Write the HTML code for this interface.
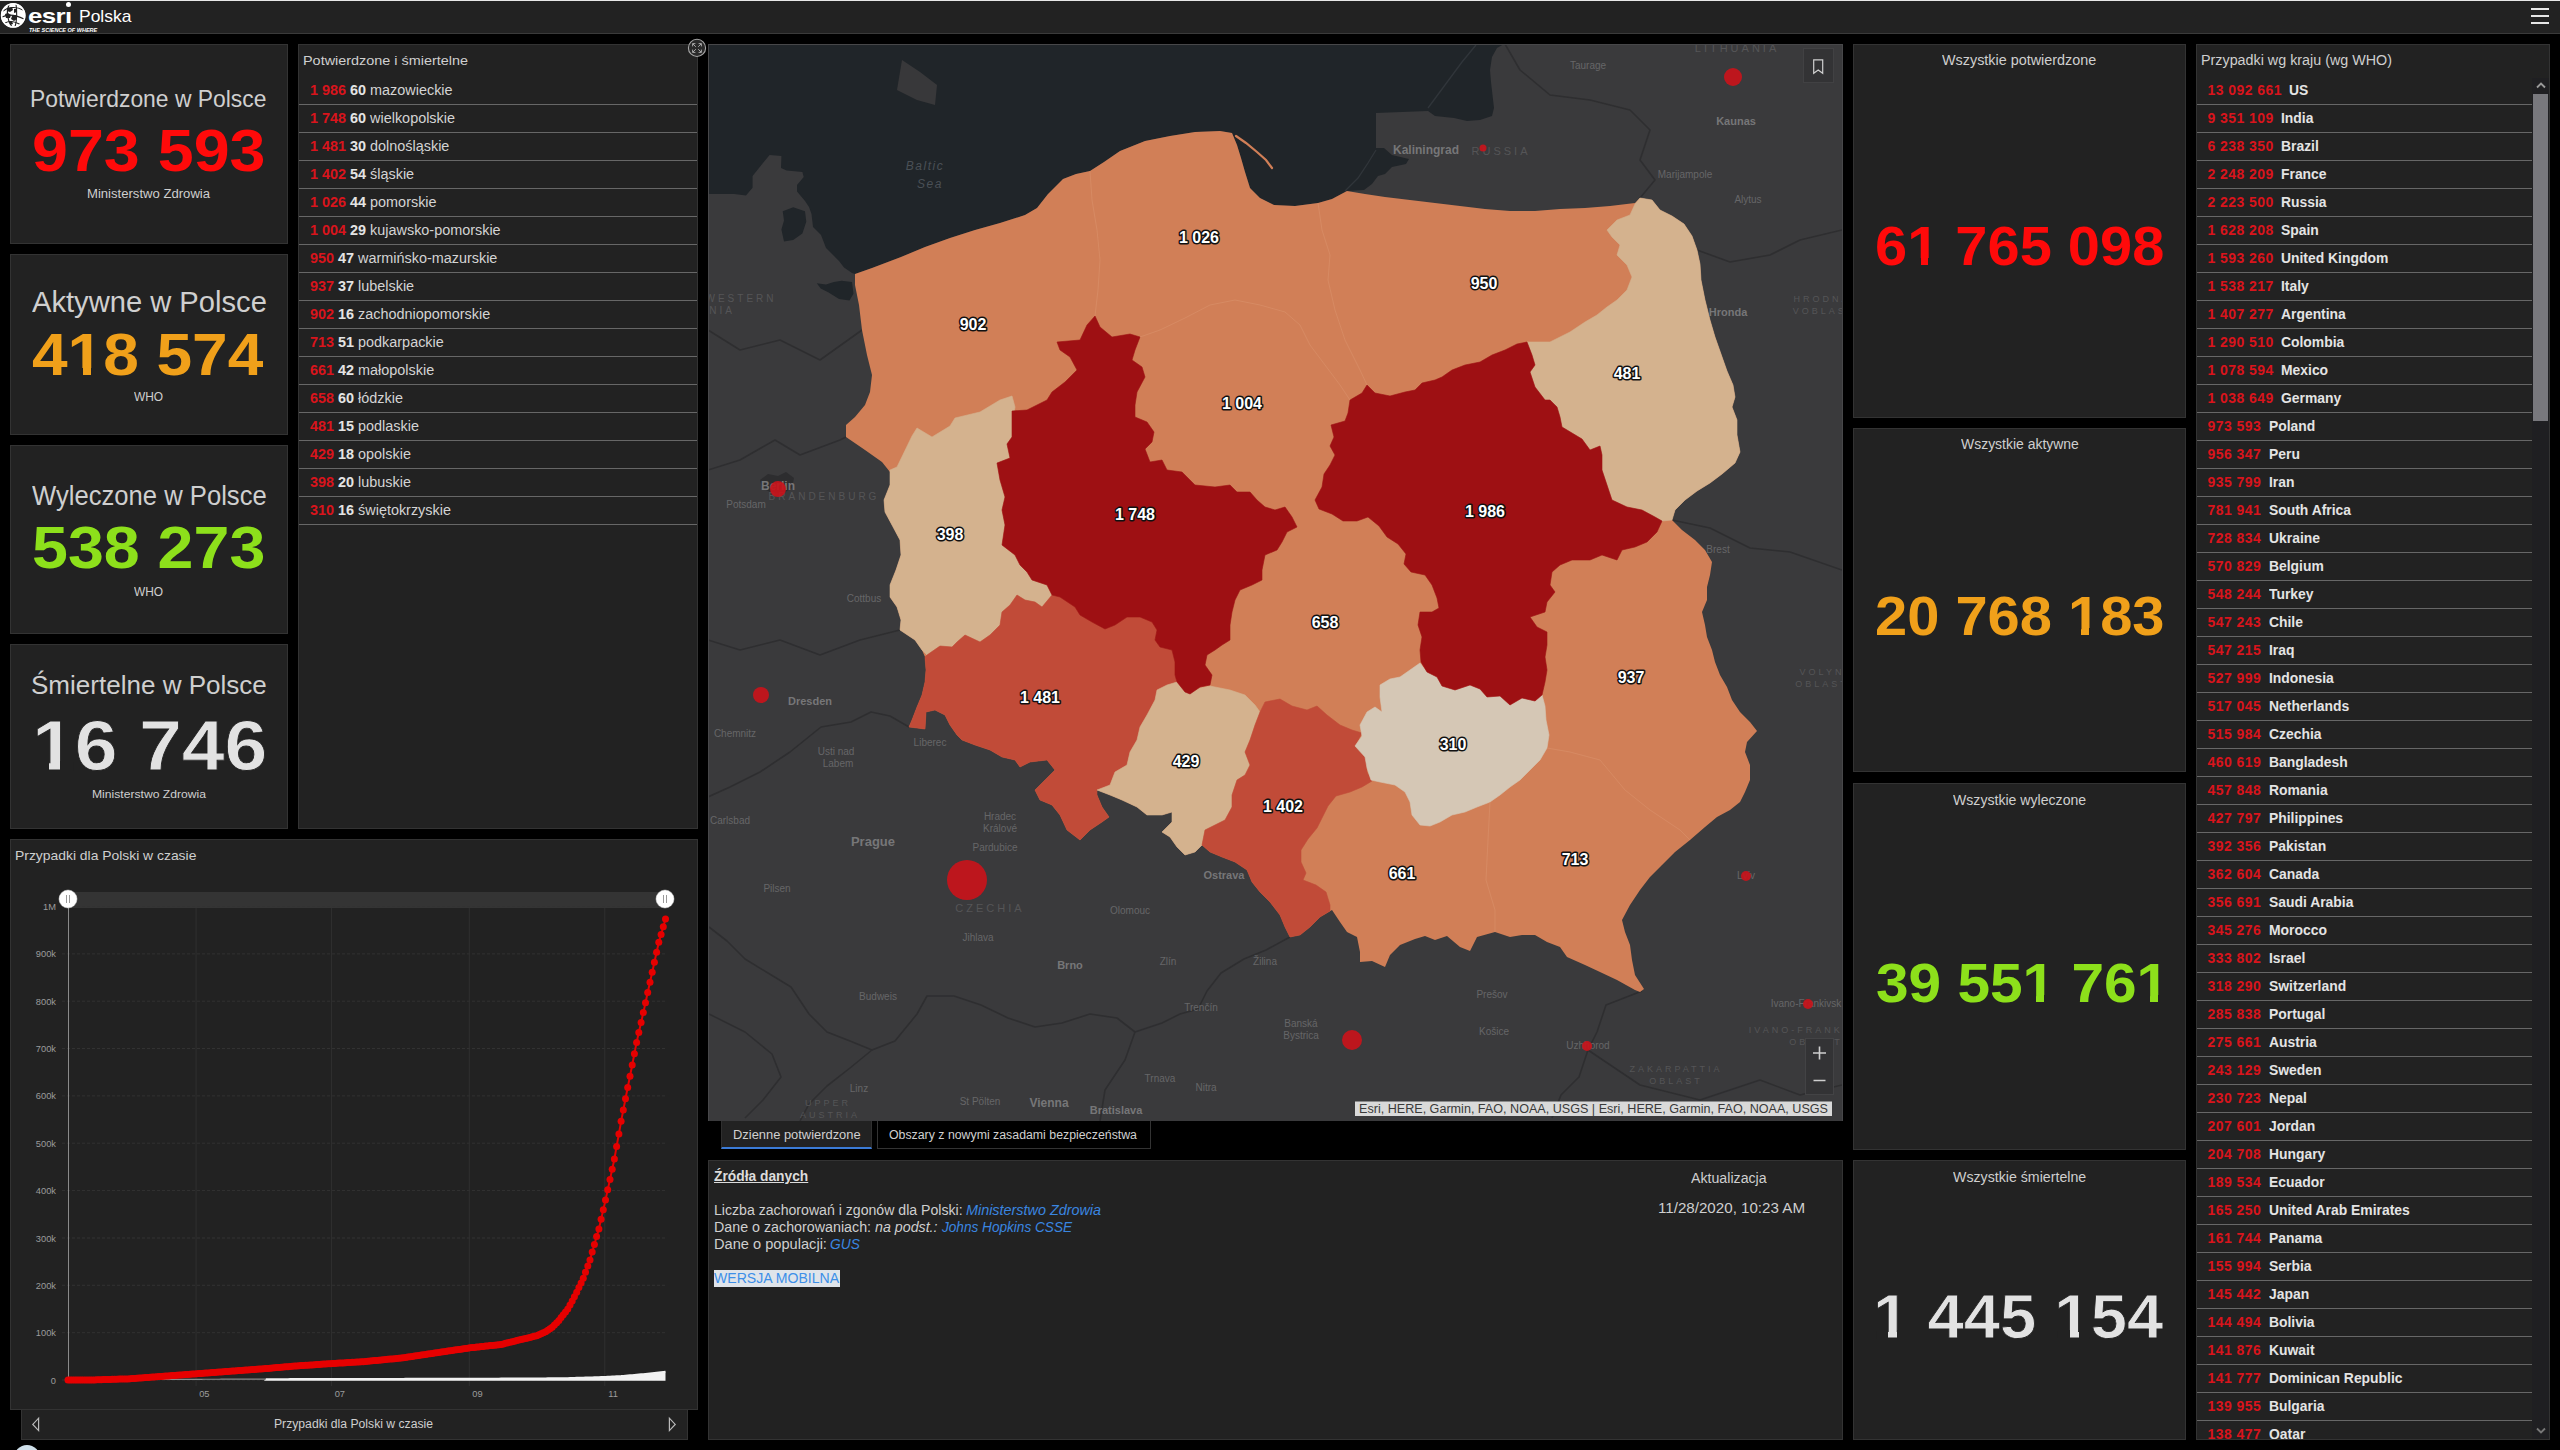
<!DOCTYPE html>
<html lang="pl"><head><meta charset="utf-8"><title>COVID-19 Polska</title><style>
*{box-sizing:border-box;margin:0;padding:0}
html,body{width:2560px;height:1450px;background:#000;overflow:hidden}
body{position:relative;font-family:"Liberation Sans","DejaVu Sans",sans-serif;color:#d4d4d4}
.ft{position:absolute;white-space:pre;line-height:1;transform-origin:0 0;display:block}
.nf{position:absolute;display:block;background:#222}
.panel{position:absolute;background:#222;border:1px solid #333;overflow:hidden}
#hdr{position:absolute;left:0;top:0;width:2560px;height:34px;background:#222;border-top:1px solid #e8e8e8;border-bottom:1px solid #3a3a3a}
.row{position:relative;height:28px;border-bottom:1px solid #676767;white-space:pre;font-size:14px;line-height:27px}
.row b.r{color:#d9141c;font-weight:bold}
.row b.w{color:#e4e4e4;font-weight:bold}
.row b.n{display:inline-block;transform:scaleX(.992);transform-origin:0 50%}
.row span{display:inline-block;transform-origin:0 50%}
a{color:#3a86e0;text-decoration:none;font-style:italic}
</style></head>
<body>
<div id="hdr"><svg style="position:absolute;left:0;top:0.5px" width="28" height="28" viewBox="0 0 28 28">
<circle cx="13.2" cy="13.4" r="11.6" fill="#fff" stroke="#fff" stroke-width="1.2"/>
<g fill="none" stroke="#222" stroke-width="1.1">
<path d="M3 9 C8 5 16 4 23 8"/><path d="M2 15 C8 12 16 13 24 17"/><path d="M5 21 C10 18 16 20 21 23"/>
<path d="M9 3 C6 9 7 18 12 25"/><path d="M16 2 C17 9 17 18 15 25"/>
</g>
<g fill="#222"><path d="M8 6l4-1 1 3-3 2-3-1z"/><path d="M5 12l3-1 3 2-1 3-4 0z"/><path d="M12 14l4-1 1 4-3 2-3-2z"/><path d="M9 19l3 0 1 3-3 1z"/><path d="M14 7l3 0 0 3-3 1z"/></g>
<circle cx="13.2" cy="13.4" r="11.6" fill="none" stroke="#fff" stroke-width="1.6"/>
</svg>
<span id="t1" class="ft" style="left:27.99px;top:3.6px;font-size:21px;color:#fff;font-weight:bold;transform:scaleX(1.2338);letter-spacing:-0.5px;">esri</span>
<div style="position:absolute;left:64.5px;top:5.2px;width:7px;height:4.6px;background:#222"></div>
<div style="position:absolute;left:65.7px;top:0.6px;width:5.6px;height:5.6px;border-radius:50%;background:#fff"></div>
<span id="t2" class="ft" style="left:78.57px;top:7.0px;font-size:17px;color:#fff;transform:scaleX(1.0275);">Polska</span>
<span id="t3" class="ft" style="left:28.61px;top:26.7px;font-size:5.6px;color:#fff;font-weight:bold;font-style:italic;transform:scaleX(0.9847);">THE SCIENCE OF WHERE</span>
<div style="position:absolute;left:2531px;top:7px;width:18px;height:16px;border-top:2px solid #e6e6e6;border-bottom:2px solid #e6e6e6"><div style="position:absolute;left:0;top:5px;width:18px;height:2px;background:#e6e6e6"></div></div>
</div>
<div class="panel" style="left:10px;top:44px;width:278px;height:200px;"><span id="t4" class="ft" style="left:19.12px;top:42.4px;font-size:24px;color:#cfcfcf;transform:scaleX(0.9527);">Potwierdzone w Polsce</span><span id="t5" class="ft" style="left:20.76px;top:76.5px;font-size:59px;color:#ff0a0a;font-weight:bold;transform:scaleX(1.0951);font-kerning:none;">973 593</span><span id="t6" class="ft" style="left:75.93px;top:142.6px;font-size:12px;color:#cfcfcf;transform:scaleX(1.0920);">Ministerstwo Zdrowia</span></div>
<div class="panel" style="left:10px;top:254px;width:278px;height:181px;"><span id="t7" class="ft" style="left:20.94px;top:32.1px;font-size:30px;color:#cfcfcf;transform:scaleX(0.9714);">Aktywne w Polsce</span><span id="t8" class="ft" style="left:21.03px;top:71.3px;font-size:59px;color:#f0a01a;font-weight:bold;transform:scaleX(1.0845);font-kerning:none;">418 574</span><i class="nf" style="left:60.06px;top:113.01px;width:11.50px;height:10.19px"></i><i class="nf" style="left:80.33px;top:113.01px;width:10.65px;height:10.19px"></i><span id="t9" class="ft" style="left:123.45px;top:135.8px;font-size:12px;color:#cfcfcf;transform:scaleX(0.9930);">WHO</span></div>
<div class="panel" style="left:10px;top:445px;width:278px;height:189px;"><span id="t10" class="ft" style="left:20.89px;top:37.0px;font-size:27px;color:#cfcfcf;transform:scaleX(0.9490);">Wyleczone w Polsce</span><span id="t11" class="ft" style="left:21.01px;top:72.8px;font-size:59px;color:#8de01b;font-weight:bold;transform:scaleX(1.0939);font-kerning:none;">538 273</span><span id="t12" class="ft" style="left:123.45px;top:139.8px;font-size:12px;color:#cfcfcf;transform:scaleX(0.9930);">WHO</span></div>
<div class="panel" style="left:10px;top:644px;width:278px;height:185px;"><span id="t13" class="ft" style="left:19.82px;top:27.2px;font-size:26.5px;color:#cfcfcf;transform:scaleX(0.9823);">Śmiertelne w Polsce</span><span id="t14" class="ft" style="left:20.54px;top:66.1px;font-size:70px;color:#e2e2e2;font-weight:bold;transform:scaleX(1.0992);font-kerning:none;-webkit-text-stroke:0.8px #222;">16 746</span><i class="nf" style="left:24.67px;top:116.05px;width:13.83px;height:11.35px"></i><i class="nf" style="left:49.06px;top:116.05px;width:12.81px;height:11.35px"></i><span id="t15" class="ft" style="left:80.50px;top:143.9px;font-size:11.5px;color:#cfcfcf;transform:scaleX(1.0555);">Ministerstwo Zdrowia</span></div>
<div class="panel" style="left:298px;top:44px;width:400px;height:785px;"><span id="t16" class="ft" style="left:4.32px;top:8.6px;font-size:13px;color:#cfcfcf;transform:scaleX(1.1086);">Potwierdzone i śmiertelne</span><div style="position:absolute;left:0;top:32px;width:398px"><div class="row" style="padding-left:11px"><span style="transform:scaleX(1.0290)"><b class="r">1 986</b> <b class="w">60</b> mazowieckie</span></div><div class="row" style="padding-left:11px"><span style="transform:scaleX(1.0290)"><b class="r">1 748</b> <b class="w">60</b> wielkopolskie</span></div><div class="row" style="padding-left:11px"><span style="transform:scaleX(1.0290)"><b class="r">1 481</b> <b class="w">30</b> dolnośląskie</span></div><div class="row" style="padding-left:11px"><span style="transform:scaleX(1.0290)"><b class="r">1 402</b> <b class="w">54</b> śląskie</span></div><div class="row" style="padding-left:11px"><span style="transform:scaleX(1.0290)"><b class="r">1 026</b> <b class="w">44</b> pomorskie</span></div><div class="row" style="padding-left:11px"><span id="rl" style="transform:scaleX(1.0290)"><b class="r">1 004</b> <b class="w">29</b> kujawsko-pomorskie</span></div><div class="row" style="padding-left:11px"><span style="transform:scaleX(1.0290)"><b class="r">950</b> <b class="w">47</b> warmińsko-mazurskie</span></div><div class="row" style="padding-left:11px"><span style="transform:scaleX(1.0290)"><b class="r">937</b> <b class="w">37</b> lubelskie</span></div><div class="row" style="padding-left:11px"><span style="transform:scaleX(1.0290)"><b class="r">902</b> <b class="w">16</b> zachodniopomorskie</span></div><div class="row" style="padding-left:11px"><span style="transform:scaleX(1.0290)"><b class="r">713</b> <b class="w">51</b> podkarpackie</span></div><div class="row" style="padding-left:11px"><span style="transform:scaleX(1.0290)"><b class="r">661</b> <b class="w">42</b> małopolskie</span></div><div class="row" style="padding-left:11px"><span style="transform:scaleX(1.0290)"><b class="r">658</b> <b class="w">60</b> łódzkie</span></div><div class="row" style="padding-left:11px"><span style="transform:scaleX(1.0290)"><b class="r">481</b> <b class="w">15</b> podlaskie</span></div><div class="row" style="padding-left:11px"><span style="transform:scaleX(1.0290)"><b class="r">429</b> <b class="w">18</b> opolskie</span></div><div class="row" style="padding-left:11px"><span style="transform:scaleX(1.0290)"><b class="r">398</b> <b class="w">20</b> lubuskie</span></div><div class="row" style="padding-left:11px"><span style="transform:scaleX(1.0290)"><b class="r">310</b> <b class="w">16</b> świętokrzyskie</span></div></div></div>
<svg style="position:absolute;left:687px;top:38px" width="20" height="20" viewBox="0 0 20 20"><circle cx="10" cy="9.9" r="8.6" fill="#2a2a2a" stroke="#a6a6a6" stroke-width="1.1"/><g stroke="#b4b4b4" stroke-width="0.9" fill="none"><path d="M5.6 8.4V5.6h2.8M14.4 8.4V5.6h-2.8M5.6 11.6V14.4h2.8M14.4 11.6V14.4h-2.8M5.8 5.8l3 3M14.2 5.8l-3 3M5.8 14.2l3-3M14.2 14.2l-3-3"/></g></svg>
<div class="panel" style="left:2196px;top:44px;width:354px;height:1396px;"><span id="t17" class="ft" style="left:4.43px;top:8.3px;font-size:14px;color:#cfcfcf;transform:scaleX(1.0228);">Przypadki wg kraju (wg WHO)</span><div style="position:absolute;left:0;top:32px;width:335px"><div class="row" style="padding-left:10.6px"><b class="r" style="letter-spacing:.42px;margin-right:7.6px">13 092 661</b><b class="w n">US</b></div><div class="row" style="padding-left:10.6px"><b class="r" style="letter-spacing:.42px;margin-right:7.6px">9 351 109</b><b class="w n">India</b></div><div class="row" style="padding-left:10.6px"><b class="r" style="letter-spacing:.42px;margin-right:7.6px">6 238 350</b><b class="w n">Brazil</b></div><div class="row" style="padding-left:10.6px"><b class="r" style="letter-spacing:.42px;margin-right:7.6px">2 248 209</b><b class="w n">France</b></div><div class="row" style="padding-left:10.6px"><b class="r" style="letter-spacing:.42px;margin-right:7.6px">2 223 500</b><b class="w n">Russia</b></div><div class="row" style="padding-left:10.6px"><b class="r" style="letter-spacing:.42px;margin-right:7.6px">1 628 208</b><b class="w n">Spain</b></div><div class="row" style="padding-left:10.6px"><b class="r" style="letter-spacing:.42px;margin-right:7.6px">1 593 260</b><b class="w n" id="rr">United Kingdom</b></div><div class="row" style="padding-left:10.6px"><b class="r" style="letter-spacing:.42px;margin-right:7.6px">1 538 217</b><b class="w n">Italy</b></div><div class="row" style="padding-left:10.6px"><b class="r" style="letter-spacing:.42px;margin-right:7.6px">1 407 277</b><b class="w n">Argentina</b></div><div class="row" style="padding-left:10.6px"><b class="r" style="letter-spacing:.42px;margin-right:7.6px">1 290 510</b><b class="w n">Colombia</b></div><div class="row" style="padding-left:10.6px"><b class="r" style="letter-spacing:.42px;margin-right:7.6px">1 078 594</b><b class="w n">Mexico</b></div><div class="row" style="padding-left:10.6px"><b class="r" style="letter-spacing:.42px;margin-right:7.6px">1 038 649</b><b class="w n">Germany</b></div><div class="row" style="padding-left:10.6px"><b class="r" style="letter-spacing:.42px;margin-right:7.6px">973 593</b><b class="w n">Poland</b></div><div class="row" style="padding-left:10.6px"><b class="r" style="letter-spacing:.42px;margin-right:7.6px">956 347</b><b class="w n">Peru</b></div><div class="row" style="padding-left:10.6px"><b class="r" style="letter-spacing:.42px;margin-right:7.6px">935 799</b><b class="w n">Iran</b></div><div class="row" style="padding-left:10.6px"><b class="r" style="letter-spacing:.42px;margin-right:7.6px">781 941</b><b class="w n">South Africa</b></div><div class="row" style="padding-left:10.6px"><b class="r" style="letter-spacing:.42px;margin-right:7.6px">728 834</b><b class="w n">Ukraine</b></div><div class="row" style="padding-left:10.6px"><b class="r" style="letter-spacing:.42px;margin-right:7.6px">570 829</b><b class="w n">Belgium</b></div><div class="row" style="padding-left:10.6px"><b class="r" style="letter-spacing:.42px;margin-right:7.6px">548 244</b><b class="w n">Turkey</b></div><div class="row" style="padding-left:10.6px"><b class="r" style="letter-spacing:.42px;margin-right:7.6px">547 243</b><b class="w n">Chile</b></div><div class="row" style="padding-left:10.6px"><b class="r" style="letter-spacing:.42px;margin-right:7.6px">547 215</b><b class="w n">Iraq</b></div><div class="row" style="padding-left:10.6px"><b class="r" style="letter-spacing:.42px;margin-right:7.6px">527 999</b><b class="w n">Indonesia</b></div><div class="row" style="padding-left:10.6px"><b class="r" style="letter-spacing:.42px;margin-right:7.6px">517 045</b><b class="w n">Netherlands</b></div><div class="row" style="padding-left:10.6px"><b class="r" style="letter-spacing:.42px;margin-right:7.6px">515 984</b><b class="w n">Czechia</b></div><div class="row" style="padding-left:10.6px"><b class="r" style="letter-spacing:.42px;margin-right:7.6px">460 619</b><b class="w n">Bangladesh</b></div><div class="row" style="padding-left:10.6px"><b class="r" style="letter-spacing:.42px;margin-right:7.6px">457 848</b><b class="w n">Romania</b></div><div class="row" style="padding-left:10.6px"><b class="r" style="letter-spacing:.42px;margin-right:7.6px">427 797</b><b class="w n">Philippines</b></div><div class="row" style="padding-left:10.6px"><b class="r" style="letter-spacing:.42px;margin-right:7.6px">392 356</b><b class="w n">Pakistan</b></div><div class="row" style="padding-left:10.6px"><b class="r" style="letter-spacing:.42px;margin-right:7.6px">362 604</b><b class="w n">Canada</b></div><div class="row" style="padding-left:10.6px"><b class="r" style="letter-spacing:.42px;margin-right:7.6px">356 691</b><b class="w n">Saudi Arabia</b></div><div class="row" style="padding-left:10.6px"><b class="r" style="letter-spacing:.42px;margin-right:7.6px">345 276</b><b class="w n">Morocco</b></div><div class="row" style="padding-left:10.6px"><b class="r" style="letter-spacing:.42px;margin-right:7.6px">333 802</b><b class="w n">Israel</b></div><div class="row" style="padding-left:10.6px"><b class="r" style="letter-spacing:.42px;margin-right:7.6px">318 290</b><b class="w n">Switzerland</b></div><div class="row" style="padding-left:10.6px"><b class="r" style="letter-spacing:.42px;margin-right:7.6px">285 838</b><b class="w n">Portugal</b></div><div class="row" style="padding-left:10.6px"><b class="r" style="letter-spacing:.42px;margin-right:7.6px">275 661</b><b class="w n">Austria</b></div><div class="row" style="padding-left:10.6px"><b class="r" style="letter-spacing:.42px;margin-right:7.6px">243 129</b><b class="w n">Sweden</b></div><div class="row" style="padding-left:10.6px"><b class="r" style="letter-spacing:.42px;margin-right:7.6px">230 723</b><b class="w n">Nepal</b></div><div class="row" style="padding-left:10.6px"><b class="r" style="letter-spacing:.42px;margin-right:7.6px">207 601</b><b class="w n">Jordan</b></div><div class="row" style="padding-left:10.6px"><b class="r" style="letter-spacing:.42px;margin-right:7.6px">204 708</b><b class="w n">Hungary</b></div><div class="row" style="padding-left:10.6px"><b class="r" style="letter-spacing:.42px;margin-right:7.6px">189 534</b><b class="w n">Ecuador</b></div><div class="row" style="padding-left:10.6px"><b class="r" style="letter-spacing:.42px;margin-right:7.6px">165 250</b><b class="w n">United Arab Emirates</b></div><div class="row" style="padding-left:10.6px"><b class="r" style="letter-spacing:.42px;margin-right:7.6px">161 744</b><b class="w n">Panama</b></div><div class="row" style="padding-left:10.6px"><b class="r" style="letter-spacing:.42px;margin-right:7.6px">155 994</b><b class="w n">Serbia</b></div><div class="row" style="padding-left:10.6px"><b class="r" style="letter-spacing:.42px;margin-right:7.6px">145 442</b><b class="w n">Japan</b></div><div class="row" style="padding-left:10.6px"><b class="r" style="letter-spacing:.42px;margin-right:7.6px">144 494</b><b class="w n">Bolivia</b></div><div class="row" style="padding-left:10.6px"><b class="r" style="letter-spacing:.42px;margin-right:7.6px">141 876</b><b class="w n">Kuwait</b></div><div class="row" style="padding-left:10.6px"><b class="r" style="letter-spacing:.42px;margin-right:7.6px">141 777</b><b class="w n">Dominican Republic</b></div><div class="row" style="padding-left:10.6px"><b class="r" style="letter-spacing:.42px;margin-right:7.6px">139 955</b><b class="w n">Bulgaria</b></div><div class="row" style="padding-left:10.6px"><b class="r" style="letter-spacing:.42px;margin-right:7.6px">138 477</b><b class="w n">Qatar</b></div></div><div style="position:absolute;left:335px;top:33px;width:17px;height:1362px;background:#1f1f22"></div><div style="position:absolute;left:336px;top:49px;width:15px;height:327px;background:#78787d"></div><svg style="position:absolute;left:338px;top:36px" width="12" height="8" viewBox="0 0 12 8"><path d="M2 6.5L6 2.5l4 4" fill="none" stroke="#999" stroke-width="1.8"/></svg><svg style="position:absolute;left:338px;top:1381.5px" width="12" height="8" viewBox="0 0 12 8"><path d="M2 1.5L6 5.5l4-4" fill="none" stroke="#777" stroke-width="1.8"/></svg></div>
<div class="panel" style="left:1853px;top:44px;width:333px;height:374px;"><span id="t18" class="ft" style="left:88.34px;top:8.3px;font-size:14px;color:#cfcfcf;transform:scaleX(1.0275);">Wszystkie potwierdzone</span><span id="t19" class="ft" style="left:20.88px;top:174.4px;font-size:55px;color:#ff0a0a;font-weight:bold;transform:scaleX(1.0509);font-kerning:none;">61 765 098</span><i class="nf" style="left:56.13px;top:213.23px;width:10.39px;height:9.77px"></i><i class="nf" style="left:74.45px;top:213.23px;width:9.62px;height:9.77px"></i></div>
<div class="panel" style="left:1853px;top:428px;width:333px;height:344px;"><span id="t20" class="ft" style="left:106.54px;top:8.1px;font-size:14px;color:#cfcfcf;transform:scaleX(0.9969);">Wszystkie aktywne</span><span id="t21" class="ft" style="left:20.99px;top:160.4px;font-size:55px;color:#f0a01a;font-weight:bold;transform:scaleX(1.0516);font-kerning:none;">20 768 183</span><i class="nf" style="left:217.08px;top:199.23px;width:10.39px;height:9.77px"></i><i class="nf" style="left:235.41px;top:199.23px;width:9.63px;height:9.77px"></i></div>
<div class="panel" style="left:1853px;top:783px;width:333px;height:367px;"><span id="t22" class="ft" style="left:98.94px;top:9.1px;font-size:14px;color:#cfcfcf;transform:scaleX(1.0070);">Wszystkie wyleczone</span><span id="t23" class="ft" style="left:21.66px;top:171.9px;font-size:55px;color:#8de01b;font-weight:bold;transform:scaleX(1.0651);font-kerning:none;">39 551 761</span><i class="nf" style="left:171.40px;top:210.73px;width:10.53px;height:9.77px"></i><i class="nf" style="left:189.97px;top:210.73px;width:9.75px;height:9.77px"></i><i class="nf" style="left:285.42px;top:210.73px;width:10.53px;height:9.77px"></i><i class="nf" style="left:303.99px;top:210.73px;width:9.75px;height:9.77px"></i></div>
<div class="panel" style="left:1853px;top:1160px;width:333px;height:280px;"><span id="t24" class="ft" style="left:98.94px;top:8.5px;font-size:14px;color:#cfcfcf;transform:scaleX(1.0131);">Wszystkie śmiertelne</span><span id="t25" class="ft" style="left:19.04px;top:124.1px;font-size:63px;color:#e2e2e2;font-weight:bold;transform:scaleX(1.0354);font-kerning:none;-webkit-text-stroke:0.8px #222;">1 445 154</span><i class="nf" style="left:22.54px;top:168.79px;width:11.72px;height:10.61px"></i><i class="nf" style="left:43.22px;top:168.79px;width:10.86px;height:10.61px"></i><i class="nf" style="left:203.91px;top:168.79px;width:11.72px;height:10.61px"></i><i class="nf" style="left:224.58px;top:168.79px;width:10.86px;height:10.61px"></i></div>
<div class="panel" style="left:708px;top:1160px;width:1135px;height:280px;"><span id="t26" class="ft" style="left:4.59px;top:8.1px;font-size:14px;color:#dcdcdc;font-weight:bold;transform:scaleX(0.9851);text-decoration:underline;">Źródła danych</span><span id="t27" class="ft" style="left:5.00px;top:42.1px;font-size:14px;color:#cfcfcf;transform:scaleX(1.0077);">Liczba zachorowań i zgonów dla Polski: </span><span id="t28" class="ft" style="left:257.06px;top:42.1px;font-size:14px;color:#3a86e0;font-style:italic;transform:scaleX(1.0270);">Ministerstwo Zdrowia</span><span id="t29" class="ft" style="left:5.00px;top:59.1px;font-size:14px;color:#cfcfcf;transform:scaleX(1.0190);">Dane o zachorowaniach: </span><span id="t30" class="ft" style="left:166.00px;top:59.1px;font-size:14px;color:#cfcfcf;font-style:italic;transform:scaleX(1.0170);">na podst.: </span><span id="t31" class="ft" style="left:232.53px;top:59.1px;font-size:14px;color:#3a86e0;font-style:italic;transform:scaleX(0.9716);">Johns Hopkins CSSE</span><span id="t32" class="ft" style="left:5.00px;top:76.1px;font-size:14px;color:#cfcfcf;transform:scaleX(1.0439);">Dane o populacji: </span><span id="t33" class="ft" style="left:121.32px;top:76.1px;font-size:14px;color:#3a86e0;font-style:italic;transform:scaleX(0.9830);">GUS</span><div style="position:absolute;left:5px;top:109px;width:126px;height:17px;background:#dfe4ea"></div><span id="t34" class="ft" style="left:5.44px;top:109.8px;font-size:14px;color:#3d8fe8;transform:scaleX(1.0050);">WERSJA MOBILNA</span><span id="t35" class="ft" style="left:981.97px;top:10.1px;font-size:14px;color:#cfcfcf;transform:scaleX(1.0124);">Aktualizacja</span><span id="t36" class="ft" style="left:948.85px;top:39.7px;font-size:14px;color:#cfcfcf;transform:scaleX(1.0811);">11/28/2020, 10:23 AM</span></div>
<div style="position:absolute;left:721px;top:1121px;width:151px;height:28px;background:#222;border:1px solid #2f2f2f;border-top:none;border-bottom:2px solid #3b7bd6"></div>
<span id="t37" class="ft" style="left:732.74px;top:1128.6px;font-size:12px;color:#d0d0d0;transform:scaleX(1.0748);">Dzienne potwierdzone</span>
<div style="position:absolute;left:877px;top:1121px;width:274px;height:28px;background:#000;border:1px solid #333;border-top:none"></div>
<span id="t38" class="ft" style="left:889.42px;top:1128.6px;font-size:12px;color:#d0d0d0;transform:scaleX(1.0271);">Obszary z nowymi zasadami bezpieczeństwa</span>
<div style="position:absolute;left:21px;top:1410px;width:667px;height:30px;background:#222;border:1px solid #333;border-top:none"></div>
<span id="t39" class="ft" style="left:274.00px;top:1418.3px;font-size:12px;color:#cfcfcf;transform:scaleX(1.0147);">Przypadki dla Polski w czasie</span>
<svg style="position:absolute;left:30px;top:1416px" width="12" height="18" viewBox="0 0 12 18"><path d="M8.6 2.2V14.6L2.8 8.4z" fill="none" stroke="#bbb" stroke-width="1.2"/></svg>
<svg style="position:absolute;left:666px;top:1416px" width="12" height="18" viewBox="0 0 12 18"><path d="M3.4 2.2V14.6L9.2 8.4z" fill="none" stroke="#bbb" stroke-width="1.2"/></svg>
<div style="position:absolute;left:14px;top:1445px;width:26px;height:26px;border-radius:50%;background:#cfe0ea"></div>
<div class="panel" style="left:10px;top:839px;width:688px;height:571px;"><svg style="position:absolute;left:0;top:0" width="686" height="569" viewBox="11 840 686 569"><rect x="68" y="892" width="598" height="16" fill="#343434"/><line x1="62" y1="906.5" x2="666" y2="906.5" stroke="#323232" stroke-width="1" stroke-dasharray="3 2"/><line x1="62" y1="953.9" x2="666" y2="953.9" stroke="#323232" stroke-width="1" stroke-dasharray="3 2"/><line x1="62" y1="1001.2" x2="666" y2="1001.2" stroke="#323232" stroke-width="1" stroke-dasharray="3 2"/><line x1="62" y1="1048.5" x2="666" y2="1048.5" stroke="#323232" stroke-width="1" stroke-dasharray="3 2"/><line x1="62" y1="1095.9" x2="666" y2="1095.9" stroke="#323232" stroke-width="1" stroke-dasharray="3 2"/><line x1="62" y1="1143.2" x2="666" y2="1143.2" stroke="#323232" stroke-width="1" stroke-dasharray="3 2"/><line x1="62" y1="1190.6" x2="666" y2="1190.6" stroke="#323232" stroke-width="1" stroke-dasharray="3 2"/><line x1="62" y1="1238.0" x2="666" y2="1238.0" stroke="#323232" stroke-width="1" stroke-dasharray="3 2"/><line x1="62" y1="1285.3" x2="666" y2="1285.3" stroke="#323232" stroke-width="1" stroke-dasharray="3 2"/><line x1="62" y1="1332.7" x2="666" y2="1332.7" stroke="#323232" stroke-width="1" stroke-dasharray="3 2"/><line x1="62" y1="1380.0" x2="666" y2="1380.0" stroke="#323232" stroke-width="1" stroke-dasharray="3 2"/><line x1="196.1" y1="908" x2="196.1" y2="1386" stroke="#303030" stroke-width="1"/><line x1="331.6" y1="908" x2="331.6" y2="1386" stroke="#303030" stroke-width="1"/><line x1="469.3" y1="908" x2="469.3" y2="1386" stroke="#303030" stroke-width="1"/><line x1="604.8" y1="908" x2="604.8" y2="1386" stroke="#303030" stroke-width="1"/><line x1="68.5" y1="908" x2="68.5" y2="1380" stroke="#8a8a8a" stroke-width="1"/><polygon points="264,1380.8 265.7,1379.09 267.9,1379.09 270.1,1379.08 272.3,1379.07 274.6,1379.07 276.8,1379.06 279.0,1379.05 281.2,1379.05 283.5,1379.04 285.7,1379.03 287.9,1379.03 290.1,1379.02 292.3,1379.02 294.6,1379.01 296.8,1379.00 299.0,1379.00 301.2,1378.99 303.4,1378.98 305.7,1378.98 307.9,1378.97 310.1,1378.96 312.3,1378.96 314.6,1378.95 316.8,1378.95 319.0,1378.94 321.2,1378.93 323.4,1378.93 325.7,1378.92 327.9,1378.91 330.1,1378.91 332.3,1378.90 334.5,1378.90 336.8,1378.89 339.0,1378.89 341.2,1378.89 343.4,1378.88 345.6,1378.88 347.9,1378.87 350.1,1378.87 352.3,1378.87 354.5,1378.86 356.8,1378.86 359.0,1378.86 361.2,1378.85 363.4,1378.85 365.6,1378.84 367.9,1378.84 370.1,1378.84 372.3,1378.83 374.5,1378.83 376.7,1378.83 379.0,1378.82 381.2,1378.82 383.4,1378.81 385.6,1378.81 387.9,1378.81 390.1,1378.80 392.3,1378.80 394.5,1378.80 396.7,1378.79 399.0,1378.79 401.2,1378.79 403.4,1378.78 405.6,1378.77 407.8,1378.77 410.1,1378.76 412.3,1378.76 414.5,1378.75 416.7,1378.75 418.9,1378.74 421.2,1378.74 423.4,1378.73 425.6,1378.73 427.8,1378.72 430.1,1378.72 432.3,1378.71 434.5,1378.71 436.7,1378.70 438.9,1378.70 441.2,1378.69 443.4,1378.69 445.6,1378.68 447.8,1378.68 450.0,1378.67 452.3,1378.67 454.5,1378.66 456.7,1378.66 458.9,1378.65 461.2,1378.65 463.4,1378.64 465.6,1378.64 467.8,1378.63 470.0,1378.63 472.3,1378.62 474.5,1378.61 476.7,1378.60 478.9,1378.59 481.1,1378.59 483.4,1378.58 485.6,1378.57 487.8,1378.56 490.0,1378.56 492.2,1378.55 494.5,1378.54 496.7,1378.53 498.9,1378.53 501.1,1378.52 503.4,1378.51 505.6,1378.50 507.8,1378.50 510.0,1378.49 512.2,1378.48 514.5,1378.47 516.7,1378.46 518.9,1378.46 521.1,1378.45 523.3,1378.44 525.6,1378.43 527.8,1378.43 530.0,1378.42 532.2,1378.41 534.4,1378.40 536.7,1378.40 538.9,1378.37 541.1,1378.34 543.3,1378.32 545.6,1378.29 547.8,1378.27 550.0,1378.24 552.2,1378.21 554.4,1378.19 556.7,1378.16 558.9,1378.14 561.1,1378.11 563.3,1378.09 565.5,1378.06 567.8,1378.03 570.0,1377.96 572.2,1377.90 574.4,1377.83 576.7,1377.76 578.9,1377.69 581.1,1377.62 583.3,1377.55 585.5,1377.48 587.8,1377.41 590.0,1377.34 592.2,1377.28 594.4,1377.21 596.6,1377.14 598.9,1377.07 601.1,1377.00 603.3,1376.93 605.5,1376.86 607.7,1376.74 610.0,1376.61 612.2,1376.49 614.4,1376.36 616.6,1376.24 618.9,1376.11 621.1,1375.98 623.3,1375.80 625.5,1375.62 627.7,1375.43 630.0,1375.25 632.2,1375.07 634.4,1374.88 636.6,1374.70 638.8,1374.48 641.1,1374.26 643.3,1374.04 645.5,1373.82 647.7,1373.59 650.0,1373.37 652.2,1373.15 654.4,1372.91 656.6,1372.66 658.8,1372.41 661.1,1372.16 663.3,1371.92 665.5,1371.67 665.5,1380.8" fill="#f2f2f2"/><polyline points="265.7,1379.09 267.9,1379.09 270.1,1379.08 272.3,1379.07 274.6,1379.07 276.8,1379.06 279.0,1379.05 281.2,1379.05 283.5,1379.04 285.7,1379.03 287.9,1379.03 290.1,1379.02 292.3,1379.02 294.6,1379.01 296.8,1379.00 299.0,1379.00 301.2,1378.99 303.4,1378.98 305.7,1378.98 307.9,1378.97 310.1,1378.96 312.3,1378.96 314.6,1378.95 316.8,1378.95 319.0,1378.94 321.2,1378.93 323.4,1378.93 325.7,1378.92 327.9,1378.91 330.1,1378.91 332.3,1378.90 334.5,1378.90 336.8,1378.89 339.0,1378.89 341.2,1378.89 343.4,1378.88 345.6,1378.88 347.9,1378.87 350.1,1378.87 352.3,1378.87 354.5,1378.86 356.8,1378.86 359.0,1378.86 361.2,1378.85 363.4,1378.85 365.6,1378.84 367.9,1378.84 370.1,1378.84 372.3,1378.83 374.5,1378.83 376.7,1378.83 379.0,1378.82 381.2,1378.82 383.4,1378.81 385.6,1378.81 387.9,1378.81 390.1,1378.80 392.3,1378.80 394.5,1378.80 396.7,1378.79 399.0,1378.79 401.2,1378.79 403.4,1378.78 405.6,1378.77 407.8,1378.77 410.1,1378.76 412.3,1378.76 414.5,1378.75 416.7,1378.75 418.9,1378.74 421.2,1378.74 423.4,1378.73 425.6,1378.73 427.8,1378.72 430.1,1378.72 432.3,1378.71 434.5,1378.71 436.7,1378.70 438.9,1378.70 441.2,1378.69 443.4,1378.69 445.6,1378.68 447.8,1378.68 450.0,1378.67 452.3,1378.67 454.5,1378.66 456.7,1378.66 458.9,1378.65 461.2,1378.65 463.4,1378.64 465.6,1378.64 467.8,1378.63 470.0,1378.63 472.3,1378.62 474.5,1378.61 476.7,1378.60 478.9,1378.59 481.1,1378.59 483.4,1378.58 485.6,1378.57 487.8,1378.56 490.0,1378.56 492.2,1378.55 494.5,1378.54 496.7,1378.53 498.9,1378.53 501.1,1378.52 503.4,1378.51 505.6,1378.50 507.8,1378.50 510.0,1378.49 512.2,1378.48 514.5,1378.47 516.7,1378.46 518.9,1378.46 521.1,1378.45 523.3,1378.44 525.6,1378.43 527.8,1378.43 530.0,1378.42 532.2,1378.41 534.4,1378.40 536.7,1378.40 538.9,1378.37 541.1,1378.34 543.3,1378.32 545.6,1378.29 547.8,1378.27 550.0,1378.24 552.2,1378.21 554.4,1378.19 556.7,1378.16 558.9,1378.14 561.1,1378.11 563.3,1378.09 565.5,1378.06 567.8,1378.03 570.0,1377.96 572.2,1377.90 574.4,1377.83 576.7,1377.76 578.9,1377.69 581.1,1377.62 583.3,1377.55 585.5,1377.48 587.8,1377.41 590.0,1377.34 592.2,1377.28 594.4,1377.21 596.6,1377.14 598.9,1377.07 601.1,1377.00 603.3,1376.93 605.5,1376.86 607.7,1376.74 610.0,1376.61 612.2,1376.49 614.4,1376.36 616.6,1376.24 618.9,1376.11 621.1,1375.98 623.3,1375.80 625.5,1375.62 627.7,1375.43 630.0,1375.25 632.2,1375.07 634.4,1374.88 636.6,1374.70 638.8,1374.48 641.1,1374.26 643.3,1374.04 645.5,1373.82 647.7,1373.59 650.0,1373.37 652.2,1373.15 654.4,1372.91 656.6,1372.66 658.8,1372.41 661.1,1372.16 663.3,1371.92 665.5,1371.67" fill="none" stroke="#f2f2f2" stroke-width="1.8"/><polyline points="161.3,1379.45 163.5,1379.44 165.7,1379.43 168.0,1379.42 170.2,1379.41 172.4,1379.40 174.6,1379.39 176.8,1379.38 179.1,1379.37 181.3,1379.36 183.5,1379.35 185.7,1379.34 187.9,1379.33 190.2,1379.32 192.4,1379.31 194.6,1379.30 196.8,1379.29 199.1,1379.29 201.3,1379.28 203.5,1379.27 205.7,1379.27 207.9,1379.26 210.2,1379.25 212.4,1379.25 214.6,1379.24 216.8,1379.23 219.0,1379.23 221.3,1379.22 223.5,1379.21 225.7,1379.21 227.9,1379.20 230.1,1379.19 232.4,1379.19 234.6,1379.18 236.8,1379.18 239.0,1379.17 241.3,1379.16 243.5,1379.16 245.7,1379.15 247.9,1379.14 250.1,1379.14 252.4,1379.13 254.6,1379.12 256.8,1379.12 259.0,1379.11 261.2,1379.10 263.5,1379.10 265.7,1379.09" fill="none" stroke="#8a8a8a" stroke-width="1.2"/><polyline points="68.0,1380.0 70.2,1380.0 72.4,1380.0 74.7,1380.0 76.9,1380.0 79.1,1380.0 81.3,1380.0 83.5,1380.0 85.8,1380.0 88.0,1380.0 90.2,1379.9 92.4,1379.9 94.7,1379.9 96.9,1379.8 99.1,1379.7 101.3,1379.7 103.5,1379.6 105.8,1379.5 108.0,1379.5 110.2,1379.4 112.4,1379.3 114.6,1379.3 116.9,1379.2 119.1,1379.1 121.3,1379.1 123.5,1379.0 125.8,1378.9 128.0,1378.9 130.2,1378.8 132.4,1378.6 134.6,1378.5 136.9,1378.3 139.1,1378.1 141.3,1377.9 143.5,1377.8 145.7,1377.6 148.0,1377.4 150.2,1377.3 152.4,1377.1 154.6,1376.9 156.8,1376.8 159.1,1376.6 161.3,1376.4 163.5,1376.2 165.7,1376.1 168.0,1375.9 170.2,1375.8 172.4,1375.6 174.6,1375.4 176.8,1375.3 179.1,1375.1 181.3,1374.9 183.5,1374.8 185.7,1374.6 187.9,1374.4 190.2,1374.3 192.4,1374.1 194.6,1374.0 196.8,1373.8 199.1,1373.6 201.3,1373.5 203.5,1373.3 205.7,1373.1 207.9,1373.0 210.2,1372.8 212.4,1372.6 214.6,1372.5 216.8,1372.3 219.0,1372.1 221.3,1372.0 223.5,1371.8 225.7,1371.6 227.9,1371.5 230.1,1371.3 232.4,1371.1 234.6,1371.0 236.8,1370.8 239.0,1370.6 241.3,1370.4 243.5,1370.3 245.7,1370.1 247.9,1369.9 250.1,1369.8 252.4,1369.6 254.6,1369.4 256.8,1369.2 259.0,1369.1 261.2,1368.9 263.5,1368.7 265.7,1368.6 267.9,1368.4 270.1,1368.2 272.3,1368.0 274.6,1367.8 276.8,1367.6 279.0,1367.4 281.2,1367.2 283.5,1367.0 285.7,1366.8 287.9,1366.7 290.1,1366.5 292.3,1366.3 294.6,1366.1 296.8,1365.9 299.0,1365.7 301.2,1365.6 303.4,1365.5 305.7,1365.3 307.9,1365.2 310.1,1365.0 312.3,1364.9 314.6,1364.7 316.8,1364.6 319.0,1364.4 321.2,1364.3 323.4,1364.1 325.7,1364.0 327.9,1363.8 330.1,1363.7 332.3,1363.5 334.5,1363.4 336.8,1363.3 339.0,1363.1 341.2,1363.0 343.4,1362.9 345.6,1362.7 347.9,1362.6 350.1,1362.5 352.3,1362.3 354.5,1362.2 356.8,1362.1 359.0,1361.9 361.2,1361.8 363.4,1361.7 365.6,1361.5 367.9,1361.2 370.1,1361.0 372.3,1360.8 374.5,1360.6 376.7,1360.4 379.0,1360.2 381.2,1360.0 383.4,1359.8 385.6,1359.5 387.9,1359.3 390.1,1359.1 392.3,1358.9 394.5,1358.7 396.7,1358.5 399.0,1358.3 401.2,1358.1 403.4,1357.7 405.6,1357.4 407.8,1357.1 410.1,1356.7 412.3,1356.4 414.5,1356.1 416.7,1355.7 418.9,1355.4 421.2,1355.1 423.4,1354.8 425.6,1354.4 427.8,1354.1 430.1,1353.8 432.3,1353.4 434.5,1353.1 436.7,1352.8 438.9,1352.5 441.2,1352.1 443.4,1351.8 445.6,1351.5 447.8,1351.1 450.0,1350.8 452.3,1350.5 454.5,1350.1 456.7,1349.8 458.9,1349.5 461.2,1349.2 463.4,1348.8 465.6,1348.5 467.8,1348.2 470.0,1347.8 472.3,1347.6 474.5,1347.4 476.7,1347.1 478.9,1346.9 481.1,1346.6 483.4,1346.4 485.6,1346.1 487.8,1345.9 490.0,1345.6 492.2,1345.4 494.5,1345.2 496.7,1344.9 498.9,1344.7 501.1,1344.4 503.4,1343.9 505.6,1343.3 507.8,1342.8 510.0,1342.3 512.2,1341.7 514.5,1341.2 516.7,1340.6 518.9,1340.1 521.1,1339.5 523.3,1339.0 525.6,1338.5 527.8,1337.9 530.0,1337.4 532.2,1336.8 534.4,1336.3 536.7,1335.7 538.9,1334.7 541.1,1333.7 543.3,1332.7 545.6,1331.7 547.8,1330.2 550.0,1328.7 552.2,1327.2 554.4,1324.9 556.7,1322.7 558.9,1320.4 561.1,1317.6 563.3,1314.7 565.5,1311.9 567.8,1309.0 570.0,1304.9 572.2,1300.9 574.4,1296.8 576.7,1292.2 578.9,1287.6 581.1,1283.0 583.3,1278.3 585.5,1272.2 587.8,1266.0 590.0,1259.9 592.2,1252.1 594.4,1244.4 596.6,1236.6 598.9,1228.9 601.1,1219.3 603.3,1209.7 605.5,1200.1 607.7,1189.8 610.0,1179.6 612.2,1169.3 614.4,1159.0 616.6,1146.4 618.9,1133.9 621.1,1121.3 623.3,1110.0 625.5,1098.8 627.7,1087.5 630.0,1076.3 632.2,1065.0 634.4,1053.7 636.6,1042.4 638.8,1032.5 641.1,1022.6 643.3,1012.6 645.5,1002.7 647.7,992.5 650.0,982.3 652.2,972.2 654.4,962.2 656.6,952.2 658.8,942.3 661.1,934.5 663.3,926.8 665.5,919.0" fill="none" stroke="#e60000" stroke-width="2"/><g fill="#e60000"><circle cx="68.0" cy="1380.0" r="3.5"/><circle cx="70.2" cy="1380.0" r="3.5"/><circle cx="72.4" cy="1380.0" r="3.5"/><circle cx="74.7" cy="1380.0" r="3.5"/><circle cx="76.9" cy="1380.0" r="3.5"/><circle cx="79.1" cy="1380.0" r="3.5"/><circle cx="81.3" cy="1380.0" r="3.5"/><circle cx="83.5" cy="1380.0" r="3.5"/><circle cx="85.8" cy="1380.0" r="3.5"/><circle cx="88.0" cy="1380.0" r="3.5"/><circle cx="90.2" cy="1379.9" r="3.5"/><circle cx="92.4" cy="1379.9" r="3.5"/><circle cx="94.7" cy="1379.9" r="3.5"/><circle cx="96.9" cy="1379.8" r="3.5"/><circle cx="99.1" cy="1379.7" r="3.5"/><circle cx="101.3" cy="1379.7" r="3.5"/><circle cx="103.5" cy="1379.6" r="3.5"/><circle cx="105.8" cy="1379.5" r="3.5"/><circle cx="108.0" cy="1379.5" r="3.5"/><circle cx="110.2" cy="1379.4" r="3.5"/><circle cx="112.4" cy="1379.3" r="3.5"/><circle cx="114.6" cy="1379.3" r="3.5"/><circle cx="116.9" cy="1379.2" r="3.5"/><circle cx="119.1" cy="1379.1" r="3.5"/><circle cx="121.3" cy="1379.1" r="3.5"/><circle cx="123.5" cy="1379.0" r="3.5"/><circle cx="125.8" cy="1378.9" r="3.5"/><circle cx="128.0" cy="1378.9" r="3.5"/><circle cx="130.2" cy="1378.8" r="3.5"/><circle cx="132.4" cy="1378.6" r="3.5"/><circle cx="134.6" cy="1378.5" r="3.5"/><circle cx="136.9" cy="1378.3" r="3.5"/><circle cx="139.1" cy="1378.1" r="3.5"/><circle cx="141.3" cy="1377.9" r="3.5"/><circle cx="143.5" cy="1377.8" r="3.5"/><circle cx="145.7" cy="1377.6" r="3.5"/><circle cx="148.0" cy="1377.4" r="3.5"/><circle cx="150.2" cy="1377.3" r="3.5"/><circle cx="152.4" cy="1377.1" r="3.5"/><circle cx="154.6" cy="1376.9" r="3.5"/><circle cx="156.8" cy="1376.8" r="3.5"/><circle cx="159.1" cy="1376.6" r="3.5"/><circle cx="161.3" cy="1376.4" r="3.5"/><circle cx="163.5" cy="1376.2" r="3.5"/><circle cx="165.7" cy="1376.1" r="3.5"/><circle cx="168.0" cy="1375.9" r="3.5"/><circle cx="170.2" cy="1375.8" r="3.5"/><circle cx="172.4" cy="1375.6" r="3.5"/><circle cx="174.6" cy="1375.4" r="3.5"/><circle cx="176.8" cy="1375.3" r="3.5"/><circle cx="179.1" cy="1375.1" r="3.5"/><circle cx="181.3" cy="1374.9" r="3.5"/><circle cx="183.5" cy="1374.8" r="3.5"/><circle cx="185.7" cy="1374.6" r="3.5"/><circle cx="187.9" cy="1374.4" r="3.5"/><circle cx="190.2" cy="1374.3" r="3.5"/><circle cx="192.4" cy="1374.1" r="3.5"/><circle cx="194.6" cy="1374.0" r="3.5"/><circle cx="196.8" cy="1373.8" r="3.5"/><circle cx="199.1" cy="1373.6" r="3.5"/><circle cx="201.3" cy="1373.5" r="3.5"/><circle cx="203.5" cy="1373.3" r="3.5"/><circle cx="205.7" cy="1373.1" r="3.5"/><circle cx="207.9" cy="1373.0" r="3.5"/><circle cx="210.2" cy="1372.8" r="3.5"/><circle cx="212.4" cy="1372.6" r="3.5"/><circle cx="214.6" cy="1372.5" r="3.5"/><circle cx="216.8" cy="1372.3" r="3.5"/><circle cx="219.0" cy="1372.1" r="3.5"/><circle cx="221.3" cy="1372.0" r="3.5"/><circle cx="223.5" cy="1371.8" r="3.5"/><circle cx="225.7" cy="1371.6" r="3.5"/><circle cx="227.9" cy="1371.5" r="3.5"/><circle cx="230.1" cy="1371.3" r="3.5"/><circle cx="232.4" cy="1371.1" r="3.5"/><circle cx="234.6" cy="1371.0" r="3.5"/><circle cx="236.8" cy="1370.8" r="3.5"/><circle cx="239.0" cy="1370.6" r="3.5"/><circle cx="241.3" cy="1370.4" r="3.5"/><circle cx="243.5" cy="1370.3" r="3.5"/><circle cx="245.7" cy="1370.1" r="3.5"/><circle cx="247.9" cy="1369.9" r="3.5"/><circle cx="250.1" cy="1369.8" r="3.5"/><circle cx="252.4" cy="1369.6" r="3.5"/><circle cx="254.6" cy="1369.4" r="3.5"/><circle cx="256.8" cy="1369.2" r="3.5"/><circle cx="259.0" cy="1369.1" r="3.5"/><circle cx="261.2" cy="1368.9" r="3.5"/><circle cx="263.5" cy="1368.7" r="3.5"/><circle cx="265.7" cy="1368.6" r="3.5"/><circle cx="267.9" cy="1368.4" r="3.5"/><circle cx="270.1" cy="1368.2" r="3.5"/><circle cx="272.3" cy="1368.0" r="3.5"/><circle cx="274.6" cy="1367.8" r="3.5"/><circle cx="276.8" cy="1367.6" r="3.5"/><circle cx="279.0" cy="1367.4" r="3.5"/><circle cx="281.2" cy="1367.2" r="3.5"/><circle cx="283.5" cy="1367.0" r="3.5"/><circle cx="285.7" cy="1366.8" r="3.5"/><circle cx="287.9" cy="1366.7" r="3.5"/><circle cx="290.1" cy="1366.5" r="3.5"/><circle cx="292.3" cy="1366.3" r="3.5"/><circle cx="294.6" cy="1366.1" r="3.5"/><circle cx="296.8" cy="1365.9" r="3.5"/><circle cx="299.0" cy="1365.7" r="3.5"/><circle cx="301.2" cy="1365.6" r="3.5"/><circle cx="303.4" cy="1365.5" r="3.5"/><circle cx="305.7" cy="1365.3" r="3.5"/><circle cx="307.9" cy="1365.2" r="3.5"/><circle cx="310.1" cy="1365.0" r="3.5"/><circle cx="312.3" cy="1364.9" r="3.5"/><circle cx="314.6" cy="1364.7" r="3.5"/><circle cx="316.8" cy="1364.6" r="3.5"/><circle cx="319.0" cy="1364.4" r="3.5"/><circle cx="321.2" cy="1364.3" r="3.5"/><circle cx="323.4" cy="1364.1" r="3.5"/><circle cx="325.7" cy="1364.0" r="3.5"/><circle cx="327.9" cy="1363.8" r="3.5"/><circle cx="330.1" cy="1363.7" r="3.5"/><circle cx="332.3" cy="1363.5" r="3.5"/><circle cx="334.5" cy="1363.4" r="3.5"/><circle cx="336.8" cy="1363.3" r="3.5"/><circle cx="339.0" cy="1363.1" r="3.5"/><circle cx="341.2" cy="1363.0" r="3.5"/><circle cx="343.4" cy="1362.9" r="3.5"/><circle cx="345.6" cy="1362.7" r="3.5"/><circle cx="347.9" cy="1362.6" r="3.5"/><circle cx="350.1" cy="1362.5" r="3.5"/><circle cx="352.3" cy="1362.3" r="3.5"/><circle cx="354.5" cy="1362.2" r="3.5"/><circle cx="356.8" cy="1362.1" r="3.5"/><circle cx="359.0" cy="1361.9" r="3.5"/><circle cx="361.2" cy="1361.8" r="3.5"/><circle cx="363.4" cy="1361.7" r="3.5"/><circle cx="365.6" cy="1361.5" r="3.5"/><circle cx="367.9" cy="1361.2" r="3.5"/><circle cx="370.1" cy="1361.0" r="3.5"/><circle cx="372.3" cy="1360.8" r="3.5"/><circle cx="374.5" cy="1360.6" r="3.5"/><circle cx="376.7" cy="1360.4" r="3.5"/><circle cx="379.0" cy="1360.2" r="3.5"/><circle cx="381.2" cy="1360.0" r="3.5"/><circle cx="383.4" cy="1359.8" r="3.5"/><circle cx="385.6" cy="1359.5" r="3.5"/><circle cx="387.9" cy="1359.3" r="3.5"/><circle cx="390.1" cy="1359.1" r="3.5"/><circle cx="392.3" cy="1358.9" r="3.5"/><circle cx="394.5" cy="1358.7" r="3.5"/><circle cx="396.7" cy="1358.5" r="3.5"/><circle cx="399.0" cy="1358.3" r="3.5"/><circle cx="401.2" cy="1358.1" r="3.5"/><circle cx="403.4" cy="1357.7" r="3.5"/><circle cx="405.6" cy="1357.4" r="3.5"/><circle cx="407.8" cy="1357.1" r="3.5"/><circle cx="410.1" cy="1356.7" r="3.5"/><circle cx="412.3" cy="1356.4" r="3.5"/><circle cx="414.5" cy="1356.1" r="3.5"/><circle cx="416.7" cy="1355.7" r="3.5"/><circle cx="418.9" cy="1355.4" r="3.5"/><circle cx="421.2" cy="1355.1" r="3.5"/><circle cx="423.4" cy="1354.8" r="3.5"/><circle cx="425.6" cy="1354.4" r="3.5"/><circle cx="427.8" cy="1354.1" r="3.5"/><circle cx="430.1" cy="1353.8" r="3.5"/><circle cx="432.3" cy="1353.4" r="3.5"/><circle cx="434.5" cy="1353.1" r="3.5"/><circle cx="436.7" cy="1352.8" r="3.5"/><circle cx="438.9" cy="1352.5" r="3.5"/><circle cx="441.2" cy="1352.1" r="3.5"/><circle cx="443.4" cy="1351.8" r="3.5"/><circle cx="445.6" cy="1351.5" r="3.5"/><circle cx="447.8" cy="1351.1" r="3.5"/><circle cx="450.0" cy="1350.8" r="3.5"/><circle cx="452.3" cy="1350.5" r="3.5"/><circle cx="454.5" cy="1350.1" r="3.5"/><circle cx="456.7" cy="1349.8" r="3.5"/><circle cx="458.9" cy="1349.5" r="3.5"/><circle cx="461.2" cy="1349.2" r="3.5"/><circle cx="463.4" cy="1348.8" r="3.5"/><circle cx="465.6" cy="1348.5" r="3.5"/><circle cx="467.8" cy="1348.2" r="3.5"/><circle cx="470.0" cy="1347.8" r="3.5"/><circle cx="472.3" cy="1347.6" r="3.5"/><circle cx="474.5" cy="1347.4" r="3.5"/><circle cx="476.7" cy="1347.1" r="3.5"/><circle cx="478.9" cy="1346.9" r="3.5"/><circle cx="481.1" cy="1346.6" r="3.5"/><circle cx="483.4" cy="1346.4" r="3.5"/><circle cx="485.6" cy="1346.1" r="3.5"/><circle cx="487.8" cy="1345.9" r="3.5"/><circle cx="490.0" cy="1345.6" r="3.5"/><circle cx="492.2" cy="1345.4" r="3.5"/><circle cx="494.5" cy="1345.2" r="3.5"/><circle cx="496.7" cy="1344.9" r="3.5"/><circle cx="498.9" cy="1344.7" r="3.5"/><circle cx="501.1" cy="1344.4" r="3.5"/><circle cx="503.4" cy="1343.9" r="3.5"/><circle cx="505.6" cy="1343.3" r="3.5"/><circle cx="507.8" cy="1342.8" r="3.5"/><circle cx="510.0" cy="1342.3" r="3.5"/><circle cx="512.2" cy="1341.7" r="3.5"/><circle cx="514.5" cy="1341.2" r="3.5"/><circle cx="516.7" cy="1340.6" r="3.5"/><circle cx="518.9" cy="1340.1" r="3.5"/><circle cx="521.1" cy="1339.5" r="3.5"/><circle cx="523.3" cy="1339.0" r="3.5"/><circle cx="525.6" cy="1338.5" r="3.5"/><circle cx="527.8" cy="1337.9" r="3.5"/><circle cx="530.0" cy="1337.4" r="3.5"/><circle cx="532.2" cy="1336.8" r="3.5"/><circle cx="534.4" cy="1336.3" r="3.5"/><circle cx="536.7" cy="1335.7" r="3.5"/><circle cx="538.9" cy="1334.7" r="3.5"/><circle cx="541.1" cy="1333.7" r="3.5"/><circle cx="543.3" cy="1332.7" r="3.5"/><circle cx="545.6" cy="1331.7" r="3.5"/><circle cx="547.8" cy="1330.2" r="3.5"/><circle cx="550.0" cy="1328.7" r="3.5"/><circle cx="552.2" cy="1327.2" r="3.5"/><circle cx="554.4" cy="1324.9" r="3.5"/><circle cx="556.7" cy="1322.7" r="3.5"/><circle cx="558.9" cy="1320.4" r="3.5"/><circle cx="561.1" cy="1317.6" r="3.5"/><circle cx="563.3" cy="1314.7" r="3.5"/><circle cx="565.5" cy="1311.9" r="3.5"/><circle cx="567.8" cy="1309.0" r="3.5"/><circle cx="570.0" cy="1304.9" r="3.5"/><circle cx="572.2" cy="1300.9" r="3.5"/><circle cx="574.4" cy="1296.8" r="3.5"/><circle cx="576.7" cy="1292.2" r="3.5"/><circle cx="578.9" cy="1287.6" r="3.5"/><circle cx="581.1" cy="1283.0" r="3.5"/><circle cx="583.3" cy="1278.3" r="3.5"/><circle cx="585.5" cy="1272.2" r="3.5"/><circle cx="587.8" cy="1266.0" r="3.5"/><circle cx="590.0" cy="1259.9" r="3.5"/><circle cx="592.2" cy="1252.1" r="3.5"/><circle cx="594.4" cy="1244.4" r="3.5"/><circle cx="596.6" cy="1236.6" r="3.5"/><circle cx="598.9" cy="1228.9" r="3.5"/><circle cx="601.1" cy="1219.3" r="3.5"/><circle cx="603.3" cy="1209.7" r="3.5"/><circle cx="605.5" cy="1200.1" r="3.5"/><circle cx="607.7" cy="1189.8" r="3.5"/><circle cx="610.0" cy="1179.6" r="3.5"/><circle cx="612.2" cy="1169.3" r="3.5"/><circle cx="614.4" cy="1159.0" r="3.5"/><circle cx="616.6" cy="1146.4" r="3.5"/><circle cx="618.9" cy="1133.9" r="3.5"/><circle cx="621.1" cy="1121.3" r="3.5"/><circle cx="623.3" cy="1110.0" r="3.5"/><circle cx="625.5" cy="1098.8" r="3.5"/><circle cx="627.7" cy="1087.5" r="3.5"/><circle cx="630.0" cy="1076.3" r="3.5"/><circle cx="632.2" cy="1065.0" r="3.5"/><circle cx="634.4" cy="1053.7" r="3.5"/><circle cx="636.6" cy="1042.4" r="3.5"/><circle cx="638.8" cy="1032.5" r="3.5"/><circle cx="641.1" cy="1022.6" r="3.5"/><circle cx="643.3" cy="1012.6" r="3.5"/><circle cx="645.5" cy="1002.7" r="3.5"/><circle cx="647.7" cy="992.5" r="3.5"/><circle cx="650.0" cy="982.3" r="3.5"/><circle cx="652.2" cy="972.2" r="3.5"/><circle cx="654.4" cy="962.2" r="3.5"/><circle cx="656.6" cy="952.2" r="3.5"/><circle cx="658.8" cy="942.3" r="3.5"/><circle cx="661.1" cy="934.5" r="3.5"/><circle cx="663.3" cy="926.8" r="3.5"/><circle cx="665.5" cy="919.0" r="3.5"/></g><circle cx="68" cy="899" r="9" fill="#fff" stroke="#ddd" stroke-width="0.5"/><path d="M66.5 895v8M69.5 895v8" stroke="#999" stroke-width="1"/><circle cx="665" cy="899" r="9" fill="#fff" stroke="#ddd" stroke-width="0.5"/><path d="M663.5 895v8M666.5 895v8" stroke="#999" stroke-width="1"/><g font-family='"Liberation Sans",sans-serif' font-size="9.3" fill="#9c9c9c"><text x="56" y="910.0" text-anchor="end">1M</text><text x="56" y="957.4" text-anchor="end">900k</text><text x="56" y="1004.7" text-anchor="end">800k</text><text x="56" y="1052.0" text-anchor="end">700k</text><text x="56" y="1099.4" text-anchor="end">600k</text><text x="56" y="1146.8" text-anchor="end">500k</text><text x="56" y="1194.1" text-anchor="end">400k</text><text x="56" y="1241.5" text-anchor="end">300k</text><text x="56" y="1288.8" text-anchor="end">200k</text><text x="56" y="1336.2" text-anchor="end">100k</text><text x="56" y="1383.5" text-anchor="end">0</text><text x="204.3" y="1397" text-anchor="middle">05</text><text x="339.8" y="1397" text-anchor="middle">07</text><text x="477.5" y="1397" text-anchor="middle">09</text><text x="613.0" y="1397" text-anchor="middle">11</text></g></svg><span id="t40" class="ft" style="left:4.06px;top:9.0px;font-size:13px;color:#cfcfcf;transform:scaleX(1.0681);">Przypadki dla Polski w czasie</span></div>
<svg style="position:absolute;left:708px;top:44px" width="1134" height="1077" viewBox="708 44 1134 1077"><rect x="708" y="44" width="1134" height="1077" fill="#3a3a3c"/><polygon points="708,44 1504,44 1497,48 1492,57 1490,70 1491,82 1494,108 1492,116 1480,120 1467,121 1454,118 1435,116 1428,111 1376,113 1376,148 1384,148 1392,155 1409,159 1406,164 1392,167 1385,174 1378,176 1372,184 1364,190 1347,191 1347,191 1332,199 1318,203 1295,206 1274,205 1260,198 1250,188 1245,172 1241,158 1237,145 1232,133 1220,131 1195,132 1170,136 1145,141 1120,151 1104,162 1090,171 1076,174 1063,179 1048,194 1037,208 1025,215 1000,223 975,230 950,238 925,247 901,257 872,268 855,274 855,274 852,273 844,267.5 839,261 834,256 826,248 821,235 813,227 811.5,214 809,207 805,201 797,191.6 797,185 803.7,177 802.4,172 786.6,170.6 781,168 781.4,156 769.6,155 763,163 752.6,176 752.6,187.7 746,195.5 734,194 708,194" fill="#202529"/><polyline points="1345,191 1358,178 1368,163 1376,150" fill="none" stroke="#30353a" stroke-width="1.3"/><polyline points="1428,108 1445,85 1462,62 1476,45" fill="none" stroke="#30353a" stroke-width="1.3"/><polygon points="782.7,211.3 793.2,207.3 805,211.3 806.3,221.7 802.4,233.5 793.2,240 784,241.4 781.4,229.6 784,220.4" fill="#202529"/><polygon points="816.8,283.3 826,284.6 833.8,282 841.7,280.7 852,282 853.5,293.8 849.5,300.4 839,299 828.6,292.5 820.7,288.6" fill="#202529"/><polygon points="902,60 920,72 937,85 935,105 917,100 897,90" fill="#38383a"/><path d="M846 437C836 432 830 425 832 415 826 405 830 395 840 392 850 388 852 380 848 372 844 360 850 345 846 335 850 320 845 305 850 298" fill="none" stroke="#202529" stroke-width="0"/><polyline points="909,727 890,716 871,712 851,722 821,727 790,752 760,772 730,787 708,797" fill="none" stroke="#2e2e30" stroke-width="1.6" stroke-linejoin="round"/><polyline points="709,927 727,941 745,959 768,973 791,987 809,1014 827,1032 850,1041 872,1050 895,1041 917,1014 927,996 954,996 981,1005 1008,1018 1035,1027 1062,1023 1090,1014 1117,1018 1135,1032 1162,1023 1180,1014 1198,1009 1207,991 1221,973 1244,959 1266,950 1290,937" fill="none" stroke="#2e2e30" stroke-width="1.6" stroke-linejoin="round"/><polyline points="1135,1032 1125,1060 1105,1090 1100,1121" fill="none" stroke="#2e2e30" stroke-width="1.6" stroke-linejoin="round"/><polyline points="709,1014 745,1032 772,1054 781,1077 763,1100 745,1118" fill="none" stroke="#2e2e30" stroke-width="1.6" stroke-linejoin="round"/><polyline points="872,1050 850,1068 827,1086 809,1104 800,1121" fill="none" stroke="#2e2e30" stroke-width="1.6" stroke-linejoin="round"/><polyline points="1642,991 1606,1005 1597,1032 1588,1050 1579,1077 1561,1095 1552,1118" fill="none" stroke="#2e2e30" stroke-width="1.6" stroke-linejoin="round"/><polyline points="1588,1050 1640,1085 1700,1100 1760,1080 1800,1095 1842,1085" fill="none" stroke="#2e2e30" stroke-width="1.6" stroke-linejoin="round"/><polyline points="1672,520 1710,528 1750,548 1790,552 1842,570" fill="none" stroke="#2e2e30" stroke-width="1.6" stroke-linejoin="round"/><polyline points="1640,198 1655,180 1640,160 1650,130 1630,110 1590,100 1550,95 1520,70 1505,44" fill="none" stroke="#2e2e30" stroke-width="1.6" stroke-linejoin="round"/><polyline points="1697,250 1730,262 1770,255 1800,240 1842,230" fill="none" stroke="#2e2e30" stroke-width="1.6" stroke-linejoin="round"/><polyline points="708,470 740,460 775,440 800,455 840,440 846,437" fill="none" stroke="#2e2e30" stroke-width="1.6" stroke-linejoin="round"/><polyline points="708,640 740,650 780,640 820,655 860,640 900,630" fill="none" stroke="#2e2e30" stroke-width="1.6" stroke-linejoin="round"/><polyline points="708,330 740,350 780,340 820,360 862,330" fill="none" stroke="#2e2e30" stroke-width="1.6" stroke-linejoin="round"/><path d="M760 480l8-6 10 2 8-4 8 6-2 10-10 6-12-2-8-4z" fill="#2d2d2f"/><g font-family='"Liberation Sans",sans-serif' text-anchor="middle"><text x="925" y="170" font-size="12" fill="#4a5056" font-style="italic" letter-spacing="1.5">Baltic</text><text x="930" y="188" font-size="12" fill="#4a5056" font-style="italic" letter-spacing="1.5">Sea</text><text x="1737" y="52" font-size="11" fill="#555557" letter-spacing="3">LITHUANIA</text><text x="1588" y="69" font-size="10" fill="#666668">Taurage</text><text x="1736" y="125" font-size="11" fill="#767678" font-weight="bold">Kaunas</text><text x="1426" y="154" font-size="12" fill="#767678" font-weight="bold">Kaliningrad</text><text x="1501" y="155" font-size="11" fill="#555557" letter-spacing="3">RUSSIA</text><text x="1685" y="178" font-size="10" fill="#666668">Marijampole</text><text x="1748" y="203" font-size="10" fill="#666668">Alytus</text><text x="1728" y="316" font-size="11" fill="#767678" font-weight="bold">Hronda</text><text x="741" y="302" font-size="10" fill="#555557" letter-spacing="3">WESTERN</text><text x="778" y="490" font-size="12" fill="#767678" font-weight="bold">Berlin</text><text x="824" y="500" font-size="10" fill="#555557" letter-spacing="3">BRANDENBURG</text><text x="746" y="508" font-size="10" fill="#666668">Potsdam</text><text x="864" y="602" font-size="10" fill="#666668">Cottbus</text><text x="810" y="705" font-size="11" fill="#767678" font-weight="bold">Dresden</text><text x="735" y="737" font-size="10" fill="#666668">Chemnitz</text><text x="836" y="755" font-size="10" fill="#666668">Usti nad</text><text x="838" y="767" font-size="10" fill="#666668">Labem</text><text x="930" y="746" font-size="10" fill="#666668">Liberec</text><text x="730" y="824" font-size="10" fill="#666668">Carlsbad</text><text x="873" y="846" font-size="13" fill="#767678" font-weight="bold">Prague</text><text x="1000" y="820" font-size="10" fill="#666668">Hradec</text><text x="1000" y="832" font-size="10" fill="#666668">Králové</text><text x="995" y="851" font-size="10" fill="#666668">Pardubice</text><text x="777" y="892" font-size="10" fill="#666668">Pilsen</text><text x="990" y="912" font-size="11" fill="#555557" letter-spacing="3">CZECHIA</text><text x="978" y="941" font-size="10" fill="#666668">Jihlava</text><text x="1130" y="914" font-size="10" fill="#666668">Olomouc</text><text x="1224" y="879" font-size="11" fill="#767678" font-weight="bold">Ostrava</text><text x="1070" y="969" font-size="11" fill="#767678" font-weight="bold">Brno</text><text x="1168" y="965" font-size="10" fill="#666668">Zlín</text><text x="1265" y="965" font-size="10" fill="#666668">Žilina</text><text x="878" y="1000" font-size="10" fill="#666668">Budweis</text><text x="1201" y="1011" font-size="10" fill="#666668">Trenčín</text><text x="1301" y="1027" font-size="10" fill="#666668">Banská</text><text x="1301" y="1039" font-size="10" fill="#666668">Bystrica</text><text x="1492" y="998" font-size="10" fill="#666668">Prešov</text><text x="1494" y="1035" font-size="10" fill="#666668">Košice</text><text x="1588" y="1049" font-size="10" fill="#666668">Uzhhorod</text><text x="859" y="1092" font-size="10" fill="#666668">Linz</text><text x="828" y="1106" font-size="9" fill="#555557" letter-spacing="3">UPPER</text><text x="980" y="1105" font-size="10" fill="#666668">St Pölten</text><text x="1049" y="1107" font-size="12" fill="#767678" font-weight="bold">Vienna</text><text x="1160" y="1082" font-size="10" fill="#666668">Trnava</text><text x="1206" y="1091" font-size="10" fill="#666668">Nitra</text><text x="1116" y="1114" font-size="11" fill="#767678" font-weight="bold">Bratislava</text><text x="1746" y="879" font-size="10" fill="#666668">Lviv</text><text x="1806" y="1007" font-size="10" fill="#666668">Ivano-Frankivsk</text><text x="1676" y="1072" font-size="9" fill="#555557" letter-spacing="3">ZAKARPATTIA</text><text x="1676" y="1084" font-size="9" fill="#555557" letter-spacing="3">OBLAST</text><text x="1718" y="553" font-size="10" fill="#666668">Brest</text><text x="1812" y="1033" font-size="9" fill="#555557" letter-spacing="3">IVANO-FRANKIVSK</text><text x="1816" y="1045" font-size="9" fill="#555557" letter-spacing="3">OBLAST</text><text x="1822" y="675" font-size="9" fill="#555557" letter-spacing="3">VOLYN</text><text x="1822" y="687" font-size="9" fill="#555557" letter-spacing="3">OBLAST</text><text x="1822" y="302" font-size="9" fill="#555557" letter-spacing="3">HRODNA</text><text x="1824" y="314" font-size="9" fill="#555557" letter-spacing="3">VOBLAST</text><text x="830" y="1118" font-size="9" fill="#555557" letter-spacing="3">AUSTRIA</text><text x="722" y="314" font-size="10" fill="#555557" letter-spacing="3">NIA</text></g><polygon points="855,274 872,268 901,257 925,247 950,238 975,230 1000,223 1025,215 1037,208 1048,194 1063,179 1076,174 1090,171 1104,162 1120,151 1145,141 1170,136 1195,132 1220,131 1232,133 1237,145 1241,158 1245,172 1250,188 1260,198 1274,205 1295,206 1318,203 1332,199 1347,191 1365,194 1385,197 1410,200 1435,203 1460,206 1485,209 1510,211 1535,211 1560,209 1585,208 1610,206 1635,203 1640,198 1652,200 1660,210 1672,216 1684,224 1692,236 1697,250 1700,264 1701,280 1705,300 1710,320 1715,337 1721,354 1727,371 1733,385 1735,397 1732,407 1737,420 1737,435 1740,452 1735,463 1722,474 1710,483 1697,491 1685,500 1675,510 1672,520 1682,530 1695,540 1705,550 1712,562 1710,575 1707,587 1707,600 1702,612 1705,625 1707,637 1712,650 1715,662 1720,675 1727,687 1732,700 1740,712 1750,722 1757,731 1747,742 1745,752 1750,765 1750,780 1745,792 1740,802 1730,810 1717,817 1705,827 1690,840 1675,852 1662,865 1650,877 1640,890 1630,905 1622,920 1625,932 1630,945 1632,960 1635,975 1644,989 1640,992 1635,990 1617,980 1600,972 1585,965 1567,957 1560,947 1547,942 1535,935 1522,935 1510,937 1495,932 1477,937 1470,951 1460,947 1447,936 1435,940 1425,936 1415,939 1400,945 1390,955 1385,967 1372,961 1360,962 1360,952 1357,937 1347,932 1340,922 1332,910 1320,917 1310,927 1300,935 1290,937 1285,927 1280,915 1270,902 1260,892 1252,882 1247,870 1235,862 1222,857 1210,852 1202,845 1195,852 1185,855 1177,847 1170,837 1162,832 1172,822 1172,812 1162,815 1147,815 1137,807 1122,800 1110,795 1097,790 1097,795 1102,807 1109,817 1102,822 1090,830 1080,840 1067,830 1060,815 1052,805 1040,800 1035,790 1045,780 1055,770 1047,760 1030,762 1020,767 1015,760 1002,757 990,750 975,745 962,740 957,735 950,725 945,715 935,710 926,712 925,729 909,727 912,720 917,707 922,695 925,682 926,670 925,657 922,650 915,640 900,630 901,620 897,607 890,597 890,585 896,570 901,555 900,540 892,525 885,512 884,500 890,485 890,472 882,462 865,450 846,437 846,425 855,417 865,405 870,392 872,375 867,355 862,330 859,305 855,285" fill="#d17f57"/><polyline points="1236,136 1246,143 1257,152 1266,160 1272,168" fill="none" stroke="#d17f57" stroke-width="2.2" stroke-linecap="round"/><polygon points="890,470 897,467 912,436 917,428 932,437 950,426 955,418 980,412 1000,400 1012,396 1015,407 1012,425 1012,437 1007,444 1010,458 997,463 1000,480 1005,497 1002,510 1005,525 1002,545 1015,555 1020,565 1027,572 1032,580 1047,585 1052,595 1042,607 1035,602 1025,600 1017,595 1010,605 1002,612 1000,625 990,635 980,642 965,635 957,642 952,647 940,646 927,655 922,650 915,640 900,630 901,620 897,607 890,597 890,585 896,570 901,555 900,540 892,525 885,512 884,500 890,485 890,472" fill="#d4b28e" stroke="#d4b28e" stroke-width="0.6" stroke-linejoin="round"/><polygon points="925,657 927,655 940,646 952,647 957,642 965,635 980,642 990,635 1000,625 1002,612 1010,605 1017,595 1025,600 1035,602 1042,607 1052,595 1060,597 1075,607 1080,615 1092,622 1105,629 1115,625 1127,617 1140,617 1152,622 1157,630 1155,640 1160,647 1172,650 1175,662 1175,675 1177,682 1167,685 1157,690 1155,700 1147,715 1140,727 1137,740 1130,752 1127,765 1115,772 1110,785 1097,790 1097,795 1102,807 1109,817 1102,822 1090,830 1080,840 1067,830 1060,815 1052,805 1040,800 1035,790 1045,780 1055,770 1047,760 1030,762 1020,767 1015,760 1002,757 990,750 975,745 962,740 957,735 950,725 945,715 935,710 926,712 925,729 909,727 912,720 917,707 922,695 925,682 926,670" fill="#c14b38" stroke="#c14b38" stroke-width="0.6" stroke-linejoin="round"/><polygon points="1157,690 1167,685 1177,682 1185,692 1190,694 1200,688 1210,686 1230,690 1245,695 1255,705 1260,712 1255,725 1250,740 1245,752 1250,765 1245,775 1237,780 1232,795 1232,807 1225,820 1215,825 1205,830 1202,845 1195,852 1185,855 1177,847 1170,837 1162,832 1172,822 1172,812 1162,815 1147,815 1137,807 1122,800 1110,795 1097,790 1110,785 1115,772 1127,765 1130,752 1137,740 1140,727 1147,715 1155,700" fill="#d4b28e" stroke="#d4b28e" stroke-width="0.6" stroke-linejoin="round"/><polygon points="1260,712 1265,702 1280,699 1292,706 1307,710 1317,706 1327,715 1340,725 1352,730 1362,733 1355,746 1366,756 1367,772 1372,781 1362,787 1350,792 1336,796 1328,806 1322,818 1317,828 1308,839 1301,850 1301,862 1306,873 1303,880 1316,885 1326,892 1330,905 1330,911 1320,917 1310,927 1300,935 1290,937 1285,927 1280,915 1270,902 1260,892 1252,882 1247,870 1235,862 1222,857 1210,852 1202,845 1205,830 1215,825 1225,820 1232,807 1232,795 1237,780 1245,775 1250,765 1245,752 1250,740 1255,725" fill="#c14b38" stroke="#c14b38" stroke-width="0.6" stroke-linejoin="round"/><polygon points="1420,663 1427,672 1437,677 1442,686 1455,690 1470,685 1480,689 1487,697 1500,696 1510,705 1522,698 1535,701 1542,695 1545,706 1546,720 1549,735 1547,748 1540,760 1530,770 1520,780 1510,787 1500,795 1490,802 1477,807 1465,812 1452,815 1440,822 1430,826 1420,825 1412,815 1410,802 1405,792 1395,785 1380,782 1371,780 1367,768 1365,757 1355,746 1362,736 1360,725 1367,712 1375,707 1382,712 1380,697 1380,685 1390,679 1400,677 1410,670" fill="#d5c7b5" stroke="#d5c7b5" stroke-width="0.6" stroke-linejoin="round"/><polygon points="1635,204 1640,198 1652,200 1660,210 1672,216 1684,224 1692,236 1697,250 1700,264 1701,280 1705,300 1710,320 1715,337 1721,354 1727,371 1733,385 1735,397 1732,407 1737,420 1737,435 1740,452 1735,463 1722,474 1710,483 1697,491 1685,500 1675,510 1672,520 1662,521 1655,517 1642,510 1627,507 1612,500 1607,485 1602,470 1602,455 1600,446 1590,450 1582,439 1572,433 1562,427 1560,417 1557,407 1550,400 1545,400 1535,387 1530,372 1535,365 1532,355 1527,342 1550,342 1560,337 1570,332 1585,322 1597,315 1607,307 1617,300 1627,290 1632,277 1627,265 1617,255 1620,245 1612,237 1607,230 1617,220 1630,215" fill="#d4b28e" stroke="#d4b28e" stroke-width="0.6" stroke-linejoin="round"/><polygon points="1012,411 1027,410 1047,400 1052,392 1065,382 1077,370 1070,357 1060,350 1057,342 1080,340 1087,325 1095,316 1100,327 1112,337 1130,334 1140,337 1135,350 1132,360 1142,367 1145,377 1137,392 1135,405 1135,417 1147,422 1154,432 1152,442 1145,449 1150,462 1162,460 1167,470 1182,472 1195,485 1215,487 1230,485 1237,492 1250,492 1257,500 1265,507 1275,510 1285,507 1292,517 1297,527 1287,532 1282,542 1277,550 1265,555 1262,570 1262,580 1252,585 1240,590 1235,600 1232,612 1230,625 1230,640 1222,645 1215,650 1207,655 1205,665 1212,675 1210,685 1200,687 1190,694 1185,692 1177,682 1175,675 1175,662 1172,650 1160,647 1155,640 1157,630 1152,622 1140,617 1127,617 1115,625 1105,629 1092,622 1080,615 1075,607 1060,597 1052,595 1047,585 1032,580 1027,572 1020,565 1015,555 1002,545 1005,525 1002,510 1005,497 1000,480 997,463 1010,458 1007,444 1012,437 1012,425" fill="#9e1013" stroke="#9e1013" stroke-width="0.6" stroke-linejoin="round"/><polygon points="1527,342 1517,344 1505,350 1492,355 1480,362 1465,365 1452,370 1442,377 1435,380 1422,383 1415,390 1405,392 1390,396 1375,393 1367,385 1362,393 1350,400 1348,413 1345,421 1331,425 1334,437 1330,446 1335,455 1330,465 1324,474 1322,487 1315,500 1319,509 1332,514 1343,521 1357,521 1368,517 1379,526 1387,537 1398,544 1406,554 1404,564 1411,572 1425,575 1432,585 1437,598 1439,608 1432,612 1420,612 1418,625 1422,637 1420,650 1421,662 1427,672 1437,677 1442,686 1455,690 1470,685 1480,689 1487,697 1500,696 1510,705 1522,698 1535,701 1542,695 1545,682 1547,670 1545,657 1547,645 1547,632 1537,627 1530,617 1545,612 1547,602 1555,592 1550,585 1552,572 1560,565 1572,560 1590,560 1602,555 1617,560 1622,550 1635,547 1647,542 1657,532 1662,521 1655,517 1642,510 1627,507 1612,500 1607,485 1602,470 1602,455 1600,446 1590,450 1582,439 1572,433 1562,427 1560,417 1557,407 1550,400 1545,400 1535,387 1530,372 1535,365 1532,355" fill="#9e1013" stroke="#9e1013" stroke-width="0.6" stroke-linejoin="round"/><polyline points="1090,171 1092,200 1097,230 1100,260 1098,290 1095,316" fill="none" stroke="#d98f68" stroke-width="1" stroke-linejoin="round" opacity="0.7"/><polyline points="1140,337 1160,330 1185,318 1210,305 1235,300 1260,305 1285,312 1300,325 1310,345 1325,365 1340,385 1350,400" fill="none" stroke="#d98f68" stroke-width="1" stroke-linejoin="round" opacity="0.7"/><polyline points="1318,203 1322,230 1330,255 1328,280 1335,310 1345,340 1360,370 1367,385" fill="none" stroke="#d98f68" stroke-width="1" stroke-linejoin="round" opacity="0.7"/><polyline points="1490,802 1488,840 1486,880 1495,910 1495,932" fill="none" stroke="#d98f68" stroke-width="1" stroke-linejoin="round" opacity="0.7"/><polyline points="1547,748 1570,752 1600,760 1625,790 1650,810 1680,830 1690,840" fill="none" stroke="#d98f68" stroke-width="1" stroke-linejoin="round" opacity="0.7"/><circle cx="1733" cy="77" r="9" fill="#c9141b" fill-opacity="0.92"/><circle cx="1483" cy="148" r="3.5" fill="#c9141b" fill-opacity="0.92"/><circle cx="778" cy="489" r="8" fill="#c9141b" fill-opacity="0.92"/><circle cx="761" cy="695" r="8" fill="#c9141b" fill-opacity="0.92"/><circle cx="967" cy="880" r="20" fill="#c9141b" fill-opacity="0.92"/><circle cx="1352" cy="1040" r="10" fill="#c9141b" fill-opacity="0.92"/><circle cx="1587" cy="1046" r="5" fill="#c9141b" fill-opacity="0.92"/><circle cx="1746" cy="876" r="5" fill="#c9141b" fill-opacity="0.92"/><circle cx="1808" cy="1004" r="5" fill="#c9141b" fill-opacity="0.92"/><g font-family='"Liberation Sans",sans-serif' font-size="16" font-weight="bold" text-anchor="middle" fill="#fff" stroke="#111" stroke-width="3" stroke-linejoin="round" paint-order="stroke fill"><text x="1199" y="242.7">1 026</text><text x="1484" y="288.7">950</text><text x="973" y="329.7">902</text><text x="1627" y="378.7">481</text><text x="1242" y="408.7">1 004</text><text x="1135" y="519.7">1 748</text><text x="1485" y="516.7">1 986</text><text x="950" y="539.7">398</text><text x="1325" y="627.7">658</text><text x="1631" y="682.7">937</text><text x="1040" y="702.7">1 481</text><text x="1453" y="749.7">310</text><text x="1186" y="766.7">429</text><text x="1283" y="811.7">1 402</text><text x="1402" y="878.7">661</text><text x="1575" y="864.7">713</text></g><rect x="1803.5" y="48.5" width="30" height="34" fill="#333335" stroke="#414143"/><path d="M1813.7 59.8h9v13.4l-4.5-3.3-4.5 3.3z" fill="none" stroke="#d0d0d0" stroke-width="1.2"/><rect x="1805.5" y="1038.5" width="28" height="56" fill="#333335" stroke="#434345"/><path d="M1813 1053h13M1819.5 1046.5v13M1813.5 1080.5h12" stroke="#cfcfcf" stroke-width="1.6" fill="none"/><rect x="1355" y="1101.5" width="477" height="14.5" fill="#d9d9d9"/><text x="1359" y="1112.6" font-family='"Liberation Sans",sans-serif' font-size="12" fill="#3a3a3a" textLength="469" lengthAdjust="spacingAndGlyphs">Esri, HERE, Garmin, FAO, NOAA, USGS | Esri, HERE, Garmin, FAO, NOAA, USGS</text></svg>
<div style="position:absolute;left:708px;top:44px;width:1135px;height:1077px;border:1px solid #474749;border-bottom:none;pointer-events:none"></div>
</body></html>
